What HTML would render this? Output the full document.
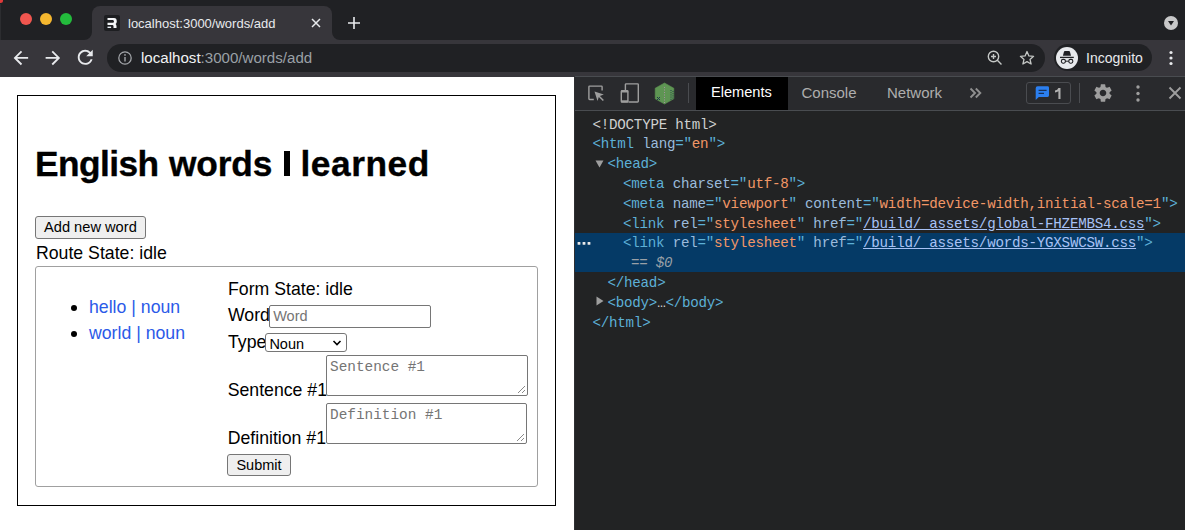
<!DOCTYPE html>
<html lang="en">
<head>
<meta charset="utf-8">
<style>
*{box-sizing:border-box;margin:0;padding:0}
html,body{width:1185px;height:530px;overflow:hidden;background:#202124;font-family:"Liberation Sans",sans-serif;position:relative}
.a{position:absolute}
.t{position:absolute;white-space:nowrap;line-height:1}
/* chrome */
#tabstrip{left:0;top:0;width:1185px;height:40px;background:#202124}
#tab{left:92px;top:6px;width:240px;height:36px;background:#37363b;border-radius:8px 8px 0 0}
#toolbar{left:0;top:40px;width:1185px;height:37px;background:#37363b}
#omni{left:107px;top:44px;width:938px;height:28px;background:#202124;border-radius:14px}
#incog{left:1054px;top:44px;width:98px;height:27px;background:#202124;border-radius:14px}
/* page */
#page{left:0;top:77px;width:574px;height:453px;background:#fff}
#devtools{left:574px;top:76px;width:611px;height:454px;background:#222324;border-left:1px solid #2e2f32}
#dtbar{left:575px;top:76px;width:610px;height:35px;background:#292a2d;border-top:1px solid #494c50;border-bottom:1px solid #494c50}
.pg{color:#000;font-size:17.7px}
.mono{font-family:"Liberation Mono",monospace;font-size:13.8px;line-height:1}
.tr{font-size:14.2px;letter-spacing:-0.24px}
.h1w{top:145.8px;font-size:35.3px;font-weight:bold;-webkit-text-stroke:0.35px #000}
.tg{color:#5db0d7}
.an{color:#9bbbdc}
.av{color:#f29766}
.lk{color:#a8c2f5;text-decoration:underline}
.gr{color:#cfd0d0}
</style>
</head>
<body>
<!-- TAB STRIP -->
<div class="a" id="tabstrip"></div>
<div class="a" style="left:-2px;top:-2px;width:5px;height:5px;border-radius:50%;background:#e03a3a"></div>
<div class="a" style="left:0;top:4px;width:1px;height:36px;background:#2c2d30"></div>
<div class="a" style="left:20px;top:13px;width:12px;height:12px;border-radius:50%;background:#f0564f"></div>
<div class="a" style="left:40px;top:13px;width:12px;height:12px;border-radius:50%;background:#f5b72f"></div>
<div class="a" style="left:60px;top:13px;width:12px;height:12px;border-radius:50%;background:#23bb3c"></div>
<div class="a" id="tab"></div>
<svg class="a" style="left:84px;top:32px" width="8" height="8"><path d="M0 8 A8 8 0 0 0 8 0 L8 8 Z" fill="#37363b"/></svg>
<svg class="a" style="left:332px;top:32px" width="8" height="8"><path d="M8 8 A8 8 0 0 1 0 0 L0 8 Z" fill="#37363b"/></svg>
<svg class="a" style="left:104px;top:15px" width="16" height="16"><rect x="0" y="0" width="16" height="16" rx="2" fill="#1d1e21"/><path d="M3.5 3 H10 Q12.8 3 12.8 6.4 Q12.8 8.2 11.6 8.9 Q12.5 9.6 12.5 11 V13 H9.5 V11.2 Q9.5 9.9 8.3 9.9 H3.5 V7.8 H8.8 Q10 7.8 10 6.6 Q10 5 8.8 5 H3.5 Z" fill="#f4f6f8"/><rect x="3.5" y="11.6" width="3.6" height="1.4" fill="#e8eef5"/></svg>
<div class="t" style="left:128px;top:17px;font-size:13px;color:#e8eaed">localhost:3000/words/add</div>
<svg class="a" style="left:311px;top:18px" width="10" height="10"><path d="M1 1 L9 9 M9 1 L1 9" stroke="#e8eaed" stroke-width="1.5"/></svg>
<svg class="a" style="left:347px;top:16px" width="14" height="14"><path d="M7 1 V13 M1 7 H13" stroke="#e8eaed" stroke-width="1.6"/></svg>
<div class="a" style="left:1164px;top:16px;width:14px;height:14px;border-radius:50%;background:#c8c8c9"></div>
<svg class="a" style="left:1164px;top:16px" width="14" height="14"><path d="M4 5 H10 L7 9.5 Z" fill="#202124"/></svg>

<!-- TOOLBAR -->
<div class="a" id="toolbar"></div>
<svg class="a" style="left:9.7px;top:46.8px" width="21.75" height="21.75" viewBox="0 0 24 24"><path d="M20 11H7.83l5.59-5.59L12 4l-8 8 8 8 1.41-1.41L7.83 13H20v-2z" fill="#e8eaed"/></svg>
<svg class="a" style="left:42.1px;top:46.8px" width="21.75" height="21.75" viewBox="0 0 24 24"><path d="M12 4l-1.41 1.41L16.17 11H4v2h12.17l-5.58 5.59L12 20l8-8z" fill="#e8eaed"/></svg>
<svg class="a" style="left:73.75px;top:46.45px" width="22.5" height="22.5" viewBox="0 0 24 24"><path d="M17.65 6.35A7.958 7.958 0 0 0 12 4c-4.42 0-7.99 3.58-7.99 8s3.57 8 7.99 8c3.73 0 6.84-2.55 7.73-6h-2.08A5.99 5.99 0 0 1 12 18c-3.31 0-6-2.69-6-6s2.69-6 6-6c1.66 0 3.14.69 4.22 1.78L13 11h7V4l-2.35 2.35z" fill="#e8eaed"/></svg>
<div class="a" id="omni"></div>
<svg class="a" style="left:117px;top:50px" width="16" height="16"><circle cx="8" cy="8" r="6.2" stroke="#a4a7ab" stroke-width="1.25" fill="none"/><path d="M8 7 V11.6" stroke="#a4a7ab" stroke-width="1.4"/><circle cx="8" cy="4.9" r="0.85" fill="#a4a7ab"/></svg>
<div class="t" style="left:141px;top:50px;font-size:15.1px;color:#f1f3f4">localhost<span style="color:#9aa0a6">:3000/words/add</span></div>
<svg class="a" style="left:987px;top:50px" width="16" height="16"><circle cx="6.5" cy="6.5" r="5.2" stroke="#c4c7c5" stroke-width="1.4" fill="none"/><path d="M10.3 10.3 L14.5 14.5 M6.5 4 V9 M4 6.5 H9" stroke="#c4c7c5" stroke-width="1.4"/></svg>
<svg class="a" style="left:1019px;top:50px" width="16" height="16"><path d="M8 1.5 L9.9 5.9 L14.6 6.3 L11 9.4 L12.1 14 L8 11.6 L3.9 14 L5 9.4 L1.4 6.3 L6.1 5.9 Z" stroke="#c4c7c5" stroke-width="1.3" fill="none" stroke-linejoin="round"/></svg>
<div class="a" id="incog"></div>
<div class="a" style="left:1056px;top:47px;width:22px;height:22px;border-radius:50%;background:#e8eaed"></div>
<svg class="a" style="left:1056px;top:47px" width="22" height="22"><path d="M6.9 8.8 L7.9 4.9 Q8.1 4.1 8.9 4.1 H13 Q13.8 4.1 14 4.9 L15 8.8 Z" fill="#202124"/><path d="M4 10.4 H17.8" stroke="#202124" stroke-width="1.3"/><rect x="5.4" y="12.4" width="4" height="3.8" rx="1.6" stroke="#202124" stroke-width="1.1" fill="none"/><rect x="12.8" y="12.4" width="4" height="3.8" rx="1.6" stroke="#202124" stroke-width="1.1" fill="none"/><path d="M9.4 14.2 H12.8" stroke="#202124" stroke-width="1"/></svg>
<div class="t" style="left:1086px;top:51px;font-size:14px;color:#e8eaed">Incognito</div>
<svg class="a" style="left:1168px;top:50px" width="6" height="16"><circle cx="3" cy="2.5" r="1.6" fill="#e8eaed"/><circle cx="3" cy="8" r="1.6" fill="#e8eaed"/><circle cx="3" cy="13.5" r="1.6" fill="#e8eaed"/></svg>

<!-- PAGE -->
<div class="a" id="page"></div>
<div class="a" style="left:17px;top:95px;width:539px;height:411px;border:1px solid #000"></div>
<div class="t pg h1w" style="left:35px;letter-spacing:-0.57px">English</div>
<div class="t pg h1w" style="left:169px;letter-spacing:-0.17px">words</div>
<div class="a" style="left:284.1px;top:150.6px;width:6.1px;height:25.2px;background:#000"></div>
<div class="t pg h1w" style="left:300.5px;letter-spacing:0.53px">learned</div>
<div class="a" style="left:35px;top:216px;width:111px;height:23px;background:#efefef;border:1px solid #767676;border-radius:3px"></div>
<div class="t pg" style="left:44px;top:220px;font-size:14.65px">Add new word</div>
<div class="t pg" style="left:36px;top:244.5px">Route State: idle</div>
<div class="a" style="left:35px;top:266px;width:503px;height:221px;border:1px solid #a0a0a0;border-radius:3px"></div>
<div class="a" style="left:71px;top:304.7px;width:6px;height:6px;border-radius:50%;background:#000"></div>
<div class="a" style="left:71px;top:331.2px;width:6px;height:6px;border-radius:50%;background:#000"></div>
<div class="t pg" style="left:89px;top:298.5px;color:#2b5ae8">hello | noun</div>
<div class="t pg" style="left:89px;top:324.8px;color:#2b5ae8">world | noun</div>
<div class="t pg" style="left:228px;top:280.8px">Form State: idle</div>
<div class="t pg" style="left:228px;top:307.1px">Word</div>
<div class="a" style="left:269px;top:305px;width:162px;height:23px;border:1px solid #767676;border-radius:2px;background:#fff"></div>
<div class="t pg" style="left:273.2px;top:308.9px;font-size:14.5px;color:#757575">Word</div>
<div class="t pg" style="left:228px;top:334.1px">Type</div>
<div class="a" style="left:264.5px;top:333.2px;width:82.5px;height:19.3px;border:1px solid #767676;border-radius:3px;background:#fff"></div>
<div class="t pg" style="left:269.4px;top:336.6px;font-size:14.5px">Noun</div>
<svg class="a" style="left:332px;top:339px" width="10" height="8"><path d="M1.5 2 L5 5.5 L8.5 2" stroke="#000" stroke-width="1.6" fill="none"/></svg>
<div class="t pg" style="left:227.7px;top:382.25px">Sentence #1</div>
<div class="a" style="left:326px;top:355px;width:202px;height:41px;border:1px solid #767676;border-radius:2px;background:#fff"></div>
<div class="t mono" style="left:330px;top:360px;font-size:14.4px;color:#757575">Sentence #1</div>
<svg class="a" style="left:517px;top:385px" width="9" height="9"><path d="M8 1 L1 8 M8 5 L5 8" stroke="#8a8a8a" stroke-width="1"/></svg>
<div class="t pg" style="left:227.7px;top:430.15px">Definition #1</div>
<div class="a" style="left:326px;top:403px;width:201px;height:41px;border:1px solid #767676;border-radius:2px;background:#fff"></div>
<div class="t mono" style="left:330px;top:408px;font-size:14.4px;color:#757575">Definition #1</div>
<svg class="a" style="left:516px;top:433px" width="9" height="9"><path d="M8 1 L1 8 M8 5 L5 8" stroke="#8a8a8a" stroke-width="1"/></svg>
<div class="a" style="left:227px;top:454px;width:64px;height:22px;background:#efefef;border:1px solid #767676;border-radius:3px"></div>
<div class="t pg" style="left:236.4px;top:458px;font-size:14.5px">Submit</div>

<!-- DEVTOOLS -->
<div class="a" id="devtools"></div>
<div class="a" id="dtbar"></div>
<!-- devtools toolbar icons -->
<svg class="a" style="left:587px;top:84px" width="18" height="18"><path d="M6.8 15.5 H2.6 Q1.9 15.5 1.9 14.8 V2.8 Q1.9 2.1 2.6 2.1 H14.4 Q15.1 2.1 15.1 2.8 V6.5" stroke="#9e9e9e" stroke-width="1.4" fill="none"/><path d="M7.5 7.6 L16.8 10.6 L12.9 12 L16.9 16 L15.8 17.1 L11.8 13.1 L10.5 17 Z" fill="#9e9e9e"/></svg>
<svg class="a" style="left:619px;top:82px" width="22" height="22"><path d="M6.4 8 V2.6 Q6.4 1.9 7.1 1.9 H18.6 Q19.3 1.9 19.3 2.6 V19.3 Q19.3 20 18.6 20 H9.5" stroke="#9e9e9e" stroke-width="1.4" fill="none"/><rect x="2.3" y="8.6" width="6.6" height="11.4" rx="0.8" stroke="#9e9e9e" stroke-width="1.4" fill="none"/><rect x="2" y="8.3" width="7.2" height="2.2" fill="#9e9e9e"/><rect x="2" y="18.3" width="7.2" height="2" fill="#9e9e9e"/></svg>
<svg class="a" style="left:654px;top:82px" width="21" height="23"><path d="M10.5 1 L19.8 6.2 V16.8 L10.5 22 L1.2 16.8 V6.2 Z" fill="#5e9553" stroke="#5e9553" stroke-width="0.6" stroke-linejoin="round"/><path d="M10.5 5 V21" stroke="#a6909e" stroke-width="1" stroke-dasharray="1 1.5"/><path d="M17 8 V19 M19 9 V17" stroke="#203a50" stroke-width="1" stroke-dasharray="1 1.2"/><path d="M3 15 L6 18 M6 15 L3 18" stroke="#1e3a4a" stroke-width="1"/></svg>
<div class="a" style="left:688px;top:83px;width:1px;height:20px;background:#4a4c50"></div>
<div class="a" style="left:696px;top:77px;width:92px;height:33px;background:#000"></div>
<div class="t" style="left:711px;top:84.5px;font-size:14.6px;color:#fff">Elements</div>
<div class="t" style="left:801.5px;top:84.5px;font-size:15px;color:#aeaeae">Console</div>
<div class="t" style="left:887px;top:84.5px;font-size:15px;color:#aeaeae">Network</div>
<svg class="a" style="left:968px;top:87px" width="15" height="12"><path d="M2.5 1.5 L7 6 L2.5 10.5 M7.8 1.5 L12.3 6 L7.8 10.5" stroke="#8f8f8f" stroke-width="1.9" fill="none"/></svg>
<div class="a" style="left:1026px;top:82px;width:45px;height:22px;border:1px solid #4a4c50;border-radius:3px"></div>
<svg class="a" style="left:1035px;top:86px" width="15" height="15"><path d="M2.6 0.3 H12.6 Q14 0.3 14 1.7 V9.6 Q14 11 12.6 11 H3.8 L0.7 13.9 V2.2 Q0.7 0.3 2.6 0.3 Z" fill="#2b7ff0"/><path d="M3.6 4.4 H11.6 M3.6 7.4 H9" stroke="#17315a" stroke-width="1.1"/></svg>
<svg class="a" style="left:1054px;top:87px" width="8" height="13"><path d="M4.4 1 H6.5 V12 H4.4 V4.2 Q3.2 5.1 1 5.4 V3.6 Q3.6 3.1 4.4 1 Z" fill="#b0b0b0"/></svg>
<div class="a" style="left:1079px;top:83px;width:1px;height:20px;background:#4a4c50"></div>
<svg class="a" style="left:1091.6px;top:82.3px" width="22" height="22" viewBox="0 0 24 24"><path d="M19.14 12.94c.04-.3.06-.61.06-.94 0-.32-.02-.64-.07-.94l2.03-1.58a.49.49 0 0 0 .12-.61l-1.92-3.32a.488.488 0 0 0-.59-.22l-2.39.96c-.5-.38-1.030-.7-1.62-.94l-.36-2.54a.484.484 0 0 0-.48-.41h-3.84c-.24 0-.43.17-.47.41l-.36 2.54c-.59.24-1.13.57-1.62.94l-2.39-.96c-.22-.08-.47 0-.59.22L2.74 8.87c-.12.21-.08.47.12.61l2.03 1.58c-.05.3-.09.63-.09.94s.02.64.07.94l-2.03 1.58a.49.49 0 0 0-.12.61l1.92 3.32c.12.22.37.29.59.22l2.39-.96c.5.38 1.03.7 1.62.94l.36 2.54c.05.24.24.41.48.41h3.84c.24 0 .44-.17.47-.41l.36-2.54c.59-.24 1.13-.56 1.62-.94l2.39.96c.22.08.47 0 .59-.22l1.92-3.32c.12-.22.07-.47-.12-.61l-2.01-1.58zM12 15.6c-1.980 0-3.6-1.62-3.6-3.6s1.62-3.6 3.6-3.6 3.6 1.62 3.6 3.6-1.62 3.6-3.6 3.6z" fill="#9e9e9e"/></svg>
<svg class="a" style="left:1134px;top:84px" width="8" height="19"><circle cx="4" cy="3" r="1.7" fill="#9e9e9e"/><circle cx="4" cy="9.5" r="1.7" fill="#9e9e9e"/><circle cx="4" cy="16" r="1.7" fill="#9e9e9e"/></svg>
<svg class="a" style="left:1168px;top:86px" width="14" height="14"><path d="M1.5 1.5 L12.5 12.5 M12.5 1.5 L1.5 12.5" stroke="#9e9e9e" stroke-width="1.9"/></svg>
<!-- elements tree -->
<div class="a" style="left:575px;top:233px;width:610px;height:39px;background:#053a66"></div>
<div class="t mono tr gr" style="left:592.5px;top:117.6px">&lt;!DOCTYPE html&gt;</div>
<div class="t mono tr" style="left:592.5px;top:137.4px"><span class="tg">&lt;html</span> <span class="an">lang</span><span class="tg">="</span><span class="av">en</span><span class="tg">"&gt;</span></div>
<svg class="a" style="left:595px;top:160px" width="9" height="8"><path d="M0.5 0.5 H8.5 L4.5 7.5 Z" fill="#9e9e9e"/></svg>
<div class="t mono tr" style="left:607.5px;top:157.2px"><span class="tg">&lt;head&gt;</span></div>
<div class="t mono tr" style="left:623px;top:177px"><span class="tg">&lt;meta</span> <span class="an">charset</span><span class="tg">="</span><span class="av">utf-8</span><span class="tg">"&gt;</span></div>
<div class="t mono tr" style="left:623px;top:196.8px"><span class="tg">&lt;meta</span> <span class="an">name</span><span class="tg">="</span><span class="av">viewport</span><span class="tg">"</span> <span class="an">content</span><span class="tg">="</span><span class="av">width=device-width,initial-scale=1</span><span class="tg">"&gt;</span></div>
<div class="t mono tr" style="left:623px;top:216.6px"><span class="tg">&lt;link</span> <span class="an">rel</span><span class="tg">="</span><span class="av">stylesheet</span><span class="tg">"</span> <span class="an">href</span><span class="tg">="</span><span class="lk">/build/_assets/global-FHZEMBS4.css</span><span class="tg">"&gt;</span></div>
<svg class="a" style="left:577px;top:241px" width="15" height="5"><rect x="0.6" y="1" width="2.8" height="2.8" rx="0.6" fill="#eaeaea"/><rect x="5.6" y="1" width="2.8" height="2.8" rx="0.6" fill="#eaeaea"/><rect x="10.6" y="1" width="2.8" height="2.8" rx="0.6" fill="#eaeaea"/></svg>
<div class="t mono tr" style="left:623px;top:236.4px"><span class="tg">&lt;link</span> <span class="an">rel</span><span class="tg">="</span><span class="av">stylesheet</span><span class="tg">"</span> <span class="an">href</span><span class="tg">="</span><span class="lk">/build/_assets/words-YGXSWCSW.css</span><span class="tg">"&gt;</span></div>
<div class="t mono tr" style="left:631px;top:256.2px;color:#9aa0a6"> == <i>$0</i></div>
<div class="t mono tr" style="left:607.5px;top:276px"><span class="tg">&lt;/head&gt;</span></div>
<svg class="a" style="left:596px;top:296px" width="8" height="10"><path d="M0.5 0.5 V9.5 L7.5 5 Z" fill="#9e9e9e"/></svg>
<div class="t mono tr" style="left:607.5px;top:295.8px"><span class="tg">&lt;body&gt;</span><span class="gr">&hellip;</span><span class="tg">&lt;/body&gt;</span></div>
<div class="t mono tr" style="left:592.5px;top:315.6px"><span class="tg">&lt;/html&gt;</span></div>

</body>
</html>
